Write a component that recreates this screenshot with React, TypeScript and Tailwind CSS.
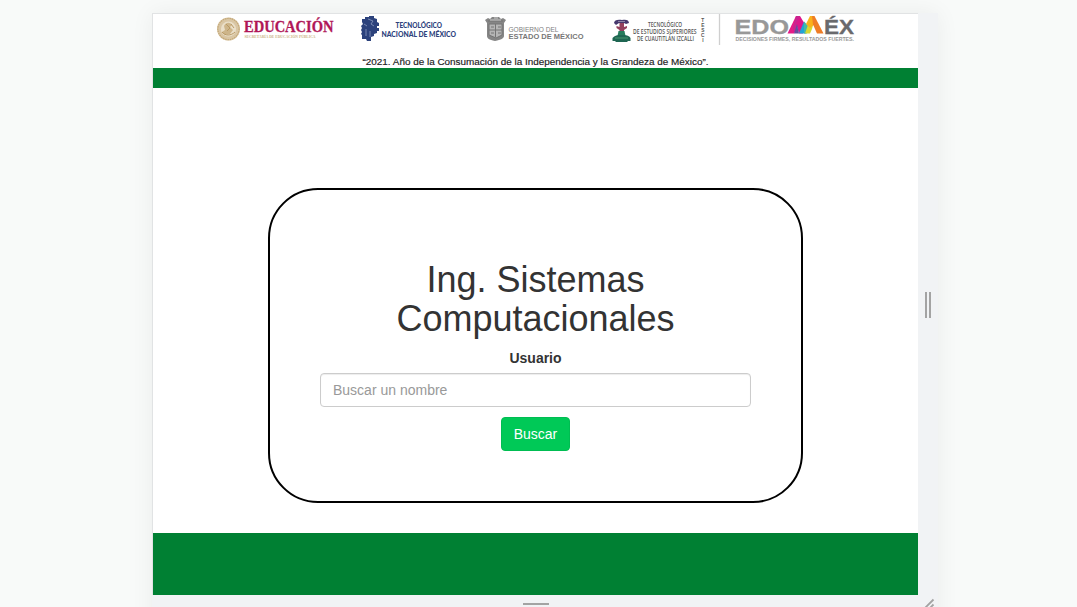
import React from "react";

const sans = "'Liberation Sans', Arial, sans-serif";
const lato = "Lato, 'Open Sans', sans-serif";

function Educacion() {
  return (
    <svg width="120" height="32" viewBox="216 14 120 32" className="shrink-0 overflow-visible">
      <circle cx="228.5" cy="29" r="11.5" fill="#d9c6a4" />
      <circle cx="228.5" cy="29" r="10.6" fill="none" stroke="#c4a878" strokeWidth="1.2" strokeDasharray="1.5 0.8" />
      <circle cx="228.5" cy="29" r="7.6" fill="#eadfc9" />
      <path d="M224 26c2-4 6-4 8-1l-2 2 3 3-3 4-5 1-3-3 3-2z" fill="#cdb58a" />
      <path d="M222 32c3 4 9 4 13 0M226 24l4 4-3 3M231 24l3 4" fill="none" stroke="#b99a65" strokeWidth="1" />
      <text x="244" y="31.5" fontFamily="'Liberation Serif', serif" fontWeight="700" fontSize="16" fill="#b01657" stroke="#b01657" strokeWidth="0.3" textLength="89.5" lengthAdjust="spacingAndGlyphs">EDUCACIÓN</text>
      <text x="244.5" y="37.6" fontFamily="'Liberation Serif', serif" fontWeight="700" fontSize="3.8" fill="#cbb386" textLength="71" lengthAdjust="spacingAndGlyphs">SECRETARÍA DE EDUCACIÓN PÚBLICA</text>
    </svg>
  );
}

function Tecnologico() {
  return (
    <svg width="98" height="32" viewBox="360 14 98 32" className="shrink-0 overflow-visible">
      <path d="M362 19h3v-2h4v-1h5v2l3 1v3l2 1v3h-2v2h2v3h-2v2l-3 1v2l-3 1v4h-4l-1-2h-4v-4l-1-1 1-2-1-2 1-2-1-2 2-2-1-2z" fill="#2c427c" />
      <path d="M368 19l5 2-2 3 3 2M364 24l3 2M366 29v7M370 31v6" fill="none" stroke="#8c9abf" strokeWidth="0.8" />
      <g fontFamily={lato} fontWeight="900" fontSize="7" fill="#2c427c">
        <text x="395.5" y="27.8" textLength="46.5" lengthAdjust="spacingAndGlyphs">TECNOLÓGICO</text>
        <text x="381.5" y="36.5" textLength="74.5" lengthAdjust="spacingAndGlyphs">NACIONAL DE MÉXICO</text>
      </g>
    </svg>
  );
}

function Gobierno() {
  return (
    <svg width="101" height="32" viewBox="484 14 101 32" className="shrink-0 overflow-visible">
      <path d="M485 20l3-2 2 1 2-2h7l2 2 2-1 3 2-2 3v13c0 2-3 4-9 5-6-1-8-3-8-5V23z" fill="#858585" />
      <path d="M489 24h13v11l-6 3-7-3z" fill="#b5b5b5" />
      <path d="M489 24h13v11l-6 3-7-3zM495.5 24v13M489 30h13M488 21h15M491 27h3M498 27h3M491 33h3M498 33h3" fill="none" stroke="#747474" strokeWidth="1" />
      <path d="M490 20h11M494 18h4" stroke="#ddd" strokeWidth="0.8" />
      <text x="508.5" y="32.3" fontFamily={sans} fontSize="6.8" fill="#808080" textLength="50" lengthAdjust="spacingAndGlyphs">GOBIERNO DEL</text>
      <text x="508.5" y="39.1" fontFamily={sans} fontWeight="700" fontSize="6.8" fill="#777" textLength="75" lengthAdjust="spacingAndGlyphs">ESTADO DE MÉXICO</text>
    </svg>
  );
}

function Tesci() {
  return (
    <svg width="110" height="32" viewBox="611 14 110 32" className="shrink-0 overflow-visible">
      <path d="M614 23c0-3 4-4 8-3 4-1 7 0 7 3l-3 1-2-1h-5l-3 2z" fill="#46386d" />
      <path d="M618 21.5h7" stroke="#8c83a4" strokeWidth="1" />
      <path d="M619.5 23h4.5v4l3-1v2l-3 2v2h-4.5v-2l-3-2v-2l3 1z" fill="#933f5c" />
      <path d="M618.5 31h6l1 5h-8z" fill="#267b5c" />
      <path d="M612.5 38c2-2.500 5-3 9-3s8 0.500 9 3v3h-3v1h-12v-1h-3z" fill="#1f6652" />
      <path d="M615 38h13" stroke="#55a377" strokeWidth="0.8" />
      <g fontFamily="'Open Sans', sans-serif" fontWeight="600" fontSize="6.3" fill="#555">
        <text x="648" y="26.6" textLength="34" lengthAdjust="spacingAndGlyphs">TECNOLÓGICO</text>
        <text x="633" y="34" textLength="63.5" lengthAdjust="spacingAndGlyphs">DE ESTUDIOS SUPERIORES</text>
        <text x="637" y="41.3" textLength="57" lengthAdjust="spacingAndGlyphs">DE CUAUTITLÁN IZCALLI</text>
      </g>
      <text
        x="702.8"
        y="17.8"
        fontFamily={sans}
        fontWeight="700"
        fontSize="4.8"
        fill="#555"
        textLength="25.5"
        lengthAdjust="spacing"
        className="[text-orientation:upright] [writing-mode:vertical-rl]"
      >
        TESCI
      </text>
      <path d="M719.5 14v31" stroke="#cfcfcf" strokeWidth="1.3" />
    </svg>
  );
}

function Edomex() {
  return (
    <svg width="122" height="32" viewBox="734 14 122 32" className="shrink-0 overflow-visible">
      <g fontFamily={sans} fontWeight="700" fontSize="21">
        <text x="734.5" y="33.6" fill="#989898" stroke="#989898" strokeWidth="0.3" textLength="54.5" lengthAdjust="spacingAndGlyphs">EDO</text>
        <text x="824" y="33.6" fill="#69696c" stroke="#69696c" strokeWidth="0.3" textLength="30" lengthAdjust="spacingAndGlyphs">ÉX</text>
      </g>
      <path d="M787.5 33.6L796 16h4l-1 8-5 9.600z" fill="#e51a86" />
      <path d="M796 16h4l-3 12-3 5.600-1-6z" fill="#c92490" />
      <path d="M800 16l6 10-3 7.600h-4l-3-10z" fill="#dd168b" />
      <path d="M797 24l-3 9.600h5z" fill="#654c9e" />
      <path d="M799 33.6l5-12 2 6v6z" fill="#20a5d5" />
      <path d="M804 21.5l5 5-2 7.100h-3z" fill="#45b7a6" />
      <path d="M805 33.6l6-17.600 3 5-2 8-2 4.600z" fill="#d6d832" />
      <path d="M806 24l4-8h4l1 8-5 4z" fill="#fab11b" />
      <path d="M812 16h2.500l9 17.600H817l-4-9z" fill="#ef7d26" />
      <text x="735.5" y="41" fontFamily={sans} fontWeight="700" fontSize="4.6" fill="#999" textLength="118.5" lengthAdjust="spacingAndGlyphs">DECISIONES FIRMES, RESULTADOS FUERTES.</text>
    </svg>
  );
}

function Banner() {
  return (
    <header className="h-[54px] bg-white pl-[63px]">
      <div className="flex h-8 items-start">
        <Educacion />
        <div className="w-6 shrink-0" />
        <Tecnologico />
        <div className="w-[26px] shrink-0" />
        <Gobierno />
        <div className="w-[26px] shrink-0" />
        <Tesci />
        <div className="w-[13px] shrink-0" />
        <Edomex />
      </div>
      <svg width="350" height="22" viewBox="361 46 350 22" className="ml-[145px] block overflow-visible">
        <text x="362.5" y="64.8" fontFamily={sans} fontSize="8.5" fill="#222" stroke="#222" strokeWidth="0.15" textLength="346" lengthAdjust="spacingAndGlyphs">“2021. Año de la Consumación de la Independencia y la Grandeza de México”.</text>
      </svg>
    </header>
  );
}

export default function App() {
  return (
    <div className="h-[607px] w-full overflow-hidden bg-[#f8faf9] pl-[152px] pt-[13px] font-['Liberation_Sans',Arial,sans-serif] text-sm text-[#333]">
      <div className="flex h-[614px] w-[786px] flex-col bg-[#f1f3f5] shadow-[0_0_22px_rgba(0,0,0,0.06)]">
        <div className="flex h-[582px] shrink-0">
          <main className="flex w-[766px] flex-col border-l border-t border-[#e1e3e4] bg-white">
            <Banner />
            <div className="h-5 shrink-0 bg-[#008033]" />
            <section className="flex h-[445px] shrink-0 justify-center pt-[100px]">
              <form
                className="flex h-[315px] w-[535px] flex-col items-center rounded-[50px] border-2 border-black px-[50px] pt-[70px]"
                onSubmit={(e) => e.preventDefault()}
              >
                <h1 className="mb-2.5 text-center text-[36px] leading-[39px]">
                  Ing. Sistemas
                  <br />
                  Computacionales
                </h1>
                <label htmlFor="usuario" className="mb-[5px] font-bold leading-5">
                  Usuario
                </label>
                <input
                  id="usuario"
                  type="text"
                  placeholder="Buscar un nombre"
                  className="mb-2.5 h-[34px] w-full shrink-0 rounded border border-[#ccc] px-3 py-1.5 leading-5 shadow-[inset_0_1px_1px_rgba(0,0,0,0.075)] placeholder:text-[#999]"
                />
                <button className="h-[34px] shrink-0 rounded border border-[#00bd52] bg-[#00c957] px-3 leading-5 text-white">
                  Buscar
                </button>
              </form>
            </section>
            <footer className="h-[62px] shrink-0 bg-[#008033]" />
          </main>
          <div className="flex w-5 items-center justify-center gap-0.5 pt-[2px]">
            <span className="h-[26px] w-0.5 bg-[#a3a3a3]" />
            <span className="h-[26px] w-0.5 bg-[#a3a3a3]" />
          </div>
        </div>
        <div className="flex h-5 shrink-0">
          <div className="flex w-[766px] justify-center pl-[2px] pt-2">
            <span className="h-0.5 w-[26px] bg-[#a3a3a3]" />
          </div>
          <svg width="20" height="20" viewBox="0 0 20 20">
            <path d="M5 15L15.5 4.5M10 15L15.5 9.5" stroke="#a3a3a3" strokeWidth="1.8" />
          </svg>
        </div>
      </div>
    </div>
  );
}
